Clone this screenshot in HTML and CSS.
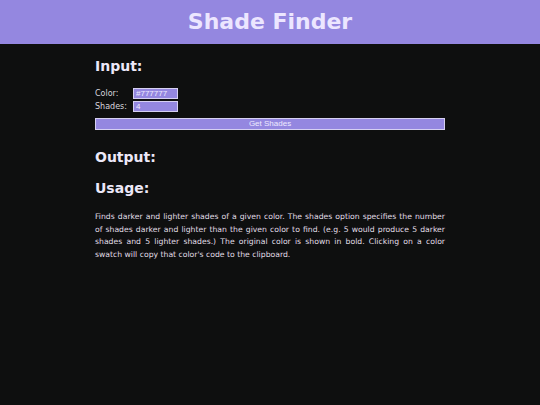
FILE: index.html
```html
<!DOCTYPE html>
<html>
<head>
<meta charset="utf-8">
<title>Shade Finder</title>
<link rel="stylesheet" href="styles.css">
</head>
<body>
<header class="top">
  <h1 class="title">Shade Finder</h1>
</header>
<main class="main">
  <h2 class="heading heading-input">Input:</h2>
  <div class="form">
    <div class="row">
      <label class="label" for="color">Color:</label>
      <input class="field" id="color" type="text" value="#777777">
    </div>
    <div class="row">
      <label class="label" for="shades">Shades:</label>
      <input class="field" id="shades" type="text" value="4">
    </div>
    <button class="btn" type="button">Get Shades</button>
  </div>
  <h2 class="heading heading-output">Output:</h2>
  <h2 class="heading heading-usage">Usage:</h2>
  <p class="usage">Finds darker and lighter shades of a given color. The shades option specifies the number of shades darker and lighter than the given color to find. (e.g. 5 would produce 5 darker shades and 5 lighter shades.) The original color is shown in bold. Clicking on a color swatch will copy that color's code to the clipboard.</p>
</main>
</body>
</html>
```

FILE: styles.css
```css
html, body {
  margin: 0;
  padding: 0;
  background: #0e0f0f;
  color: #e6e2f2;
  font-family: "DejaVu Sans", Verdana, sans-serif;
}
.top {
  height: 44px;
  background: #9487e0;
  display: flex;
  align-items: center;
  justify-content: center;
}
.title {
  margin: 0;
  font-size: 22px;
  font-weight: bold;
  color: #ece6ff;
  line-height: 44px;
}
.main {
  width: 350px;
  margin: 0 auto;
}
.heading {
  margin: 0;
  font-size: 14px;
  font-weight: bold;
  color: #ece8f8;
  line-height: 17px;
}
.heading-input {
  margin-top: 14px;
}
.form {
  margin-top: 12px;
  display: flex;
  flex-direction: column;
}
.row {
  display: flex;
  align-items: center;
  height: 13px;
}
.label {
  width: 38px;
  font-size: 8px;
  color: #d8d6de;
}
.field {
  box-sizing: border-box;
  width: 45px;
  height: 11px;
  margin: 0;
  padding: 0 2px;
  border: 1px solid #d6d0f2;
  background: #9487e0;
  color: #eeeaff;
  font-family: "Liberation Sans", Arial, sans-serif;
  font-size: 8px;
  outline: none;
}
.btn {
  box-sizing: border-box;
  margin-top: 5px;
  width: 350px;
  height: 12px;
  padding: 0;
  border: 1px solid #d6d0f2;
  background: #9487e0;
  color: #eeeaff;
  font-family: "Liberation Sans", Arial, sans-serif;
  font-size: 8px;
  line-height: 10px;
}
.heading-output {
  margin-top: 19px;
}
.heading-usage {
  margin-top: 14px;
}
.usage {
  margin: 14px 0 0;
  font-size: 7.7px;
  line-height: 12.5px;
  text-align: justify;
  color: #e0dee6;
}
```
